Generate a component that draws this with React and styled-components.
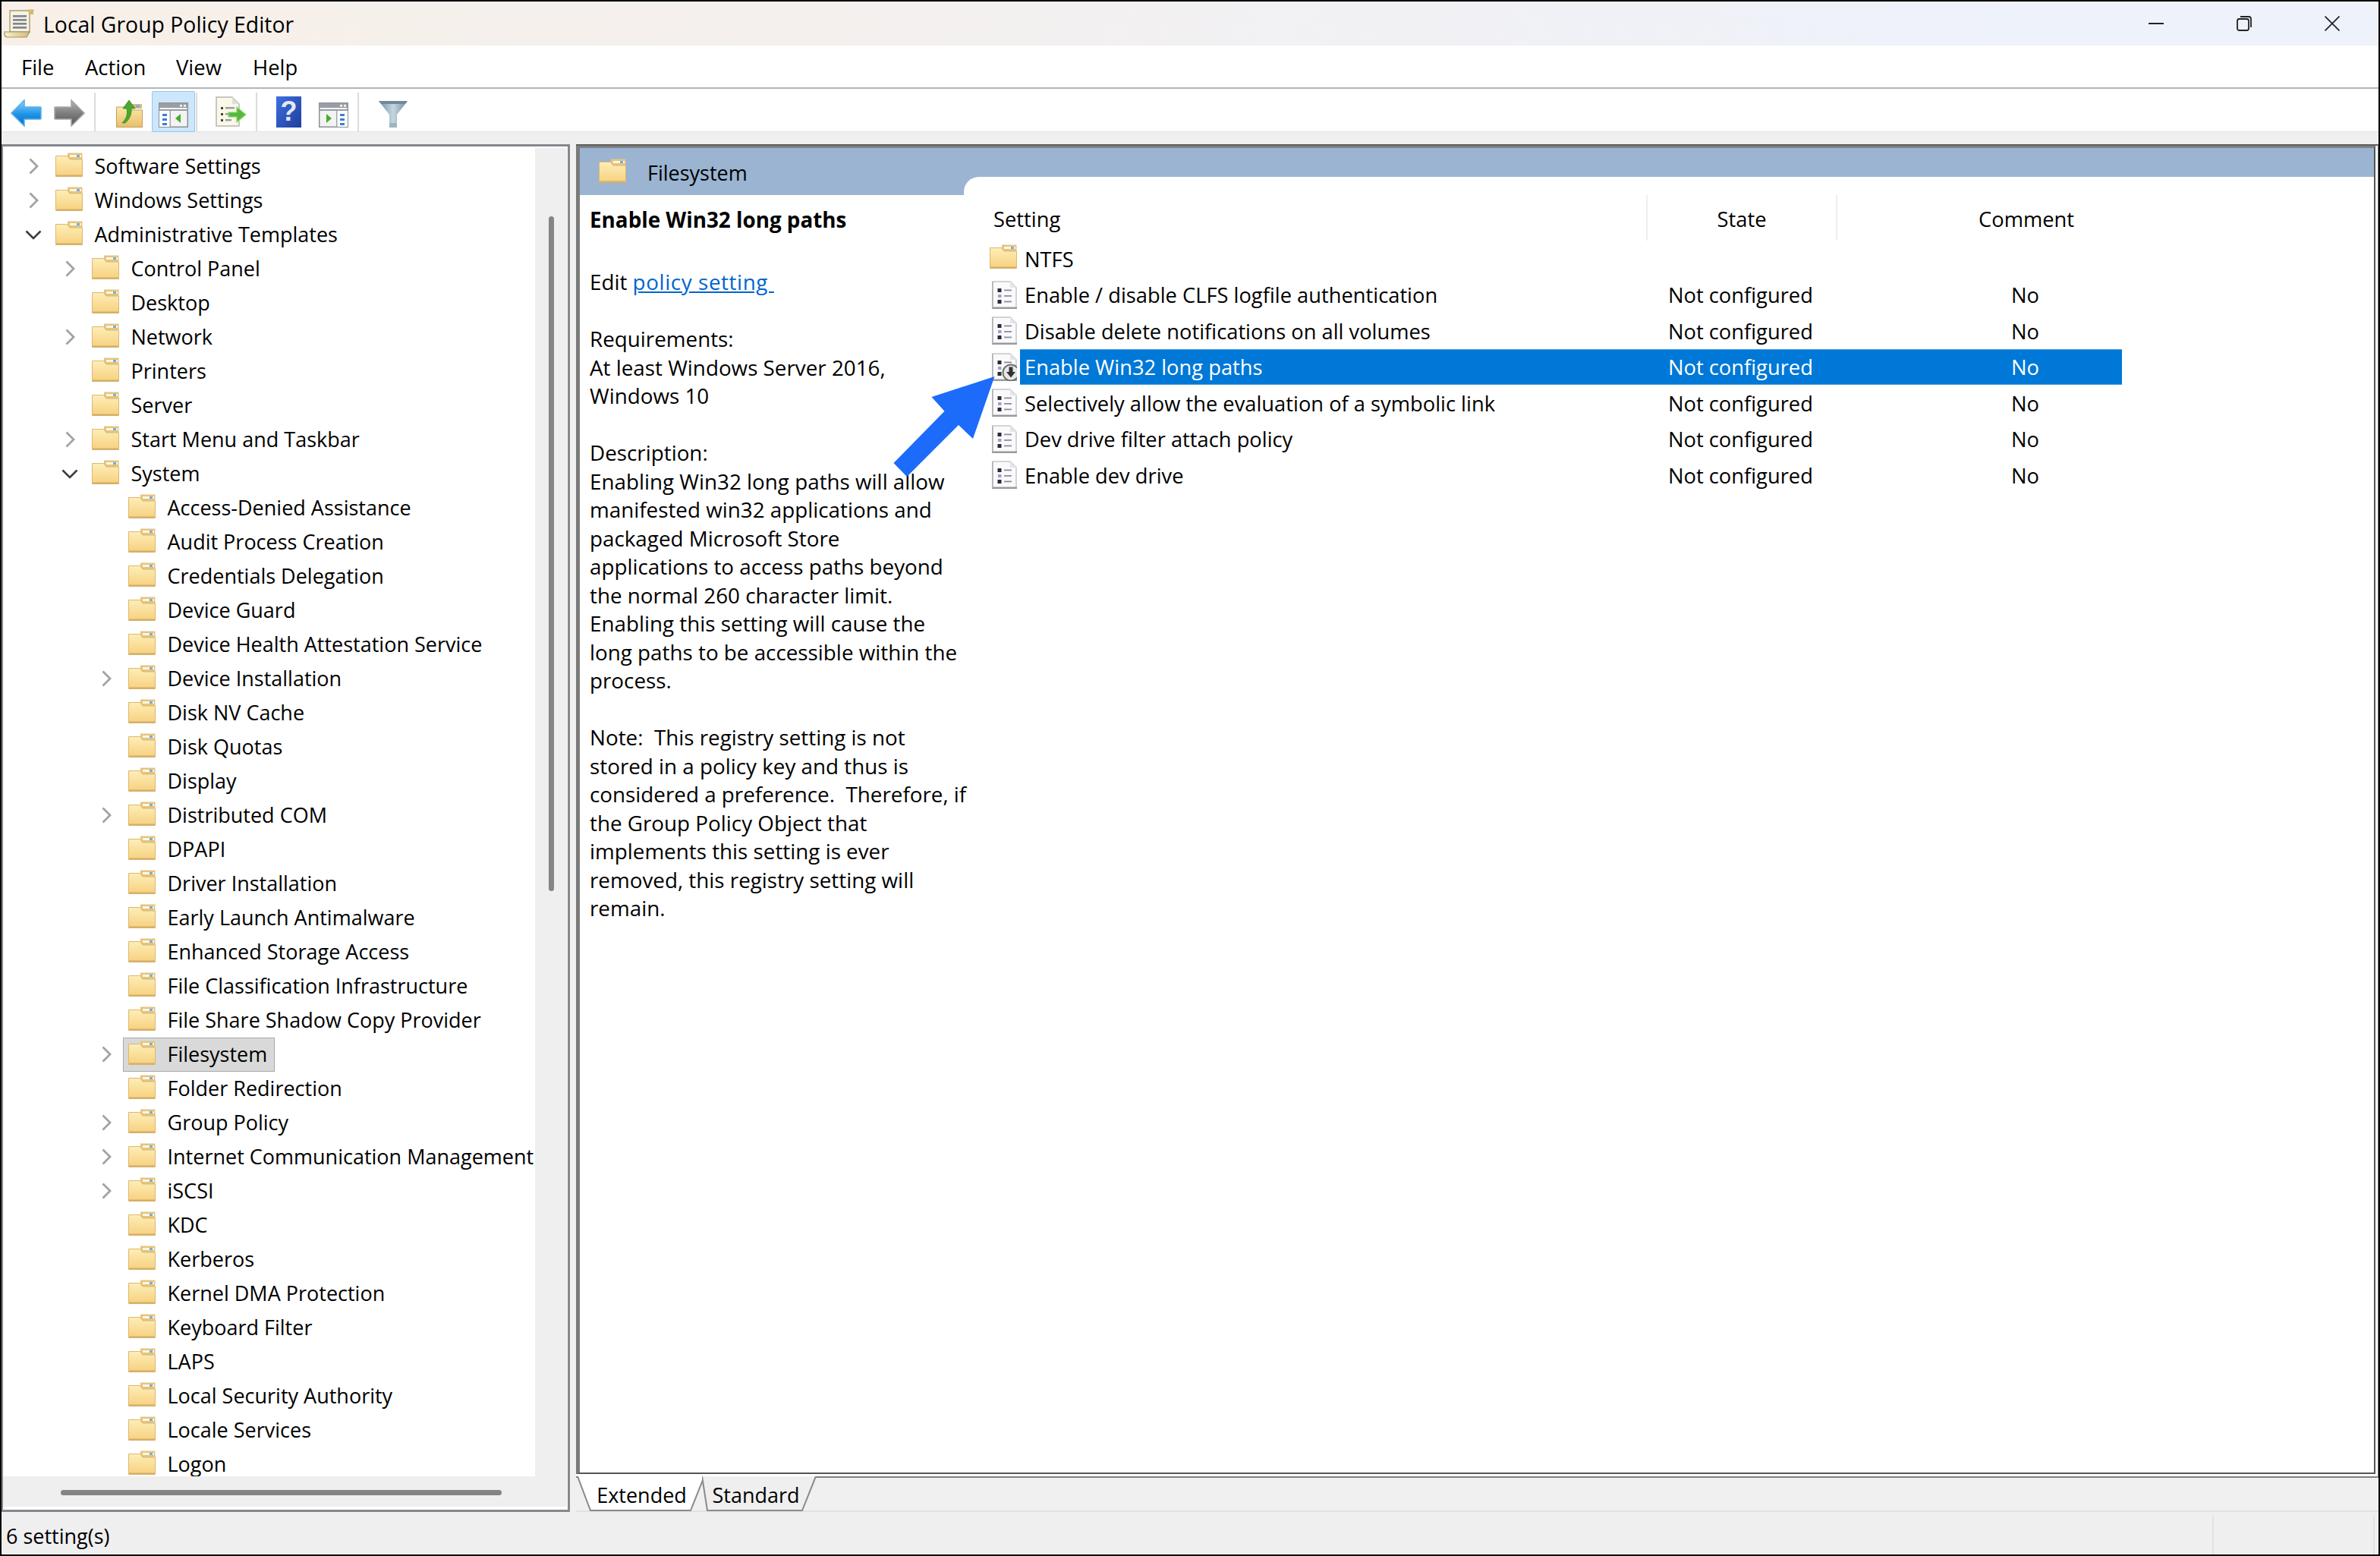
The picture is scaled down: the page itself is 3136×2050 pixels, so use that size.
import React from "react";
import styled, { createGlobalStyle } from "styled-components";

const Global = createGlobalStyle`
  html, body { margin: 0; padding: 0; background: #000; }
  * { box-sizing: border-box; }
  body { font-family: "Open Sans", "Noto Sans", "Liberation Sans", sans-serif; font-size: 27px; color: #000; }
`;

const Root = styled.div`
  position: relative;
  width: 3136px;
  height: 2050px;
  border: 2px solid #000;
  background: #f0f0f0;
  display: flex;
  flex-direction: column;
  overflow: hidden;
`;
const TitleBar = styled.div`
  height: 58px;
  flex: none;
  display: flex;
  align-items: center;
  padding-left: 3px;
  gap: 12px;
  background: linear-gradient(90deg, #f8f0e8 0%, #f4f0ee 35%, #eef2fb 85%);
`;
const TitleText = styled.div`
  font-size: 28.4px;
  line-height: 58px;
  padding-top: 2px;
  white-space: nowrap;
`;
const WindowButtons = styled.div`
  margin-left: auto;
  margin-right: 3px;
  display: flex;
`;
const WindowButton = styled.div`
  width: 116px;
  height: 58px;
  display: flex;
  align-items: center;
  justify-content: center;
`;
const MenuBar = styled.div`
  height: 57px;
  flex: none;
  background: #fff;
  border-bottom: 2px solid #b4b4b4;
  display: flex;
  align-items: center;
  padding-left: 26px;
  padding-top: 2px;
  font-size: 27.4px;
`;
const MenuItem = styled.div`
  width: ${(p) => p.$w}px;
`;
const Toolbar = styled.div`
  height: 57px;
  flex: none;
  background: #fff;
  border-bottom: 1px solid #e4e4e4;
  display: flex;
  align-items: flex-start;
  padding: 3px 0 0 4px;
`;
const ToolButton = styled.div`
  width: 57px;
  height: 54px;
  flex: none;
  margin-left: ${(p) => p.$ml || 0}px;
  padding-top: ${(p) => p.$pt || 0}px;
  display: flex;
  align-items: center;
  justify-content: center;
  border: 1px solid ${(p) => (p.$hot ? "#92c6f2" : "transparent")};
  border-radius: 2px;
  background: ${(p) => (p.$hot ? "#cce6fb" : "transparent")};
  position: relative;
`;
const ToolSep = styled.div`
  width: 2px;
  height: 51px;
  flex: none;
  background: #dcdcdc;
  margin: 2px ${(p) => p.$mr ?? 16}px 0 ${(p) => p.$ml ?? 4}px;
`;
const Strip = styled.div`
  height: 16px;
  flex: none;
  background: #efefef;
`;
const Content = styled.div`
  flex: 1;
  min-height: 0;
  display: flex;
  gap: 8px;
`;
const LeftPane = styled.div`
  width: 749px;
  flex: none;
  background: #fff;
  border-style: solid;
  border-color: #85888e;
  border-width: 3px 3px 3px 2px;
  padding: 2px 2px 4px 0;
  display: grid;
  grid-template-columns: 701px 42px;
  grid-template-rows: 1750px 40px;
`;
const Tree = styled.div`
  padding-top: 1.5px;
  background: #fff;
`;
const TreeRow = styled.div`
  height: 45px;
  display: flex;
  align-items: center;
  padding-left: ${(p) => 18 + p.$depth * 48}px;
  white-space: nowrap;
`;
const ChevronSlot = styled.div`
  width: 44px;
  flex: none;
  display: flex;
  justify-content: center;
  align-items: center;
`;
const TreeLabel = styled.div`
  height: 45px;
  display: flex;
  align-items: center;
  gap: 15.5px;
  padding: 0 8.5px 0 6px;
  border: 1.5px solid ${(p) => (p.$sel ? "#a9a9a9" : "transparent")};
  background: ${(p) => (p.$sel ? "#d9d9d9" : "transparent")};
`;
const TreeText = styled.span`
  line-height: 30px;
`;
const VTrack = styled.div`
  background: #efefef;
  padding: 90px 0 0 18px;
`;
const VThumb = styled.div`
  width: 7px;
  height: 889px;
  border-radius: 4px;
  background: #858585;
`;
const HTrack = styled.div`
  grid-column: 1 / 3;
  background: #efefef;
  padding: 18px 0 0 76px;
`;
const HThumb = styled.div`
  width: 581px;
  height: 7px;
  border-radius: 4px;
  background: #858585;
`;
const RightCol = styled.div`
  flex: 1;
  min-width: 0;
  display: flex;
  flex-direction: column;
`;
const FrameWrap = styled.div`
  height: 1755px;
  flex: none;
  background: #fff;
  border-top: 2px solid #5d5d5d;
  border-right: 1px solid #777;
  padding: 0 3px 3px 0;
  display: flex;
`;
const Frame = styled.div`
  flex: 1;
  min-width: 0;
  background: #fff;
  border-style: solid;
  border-color: #808080 #555 #555 #7b7b7b;
  border-width: 3px 2px 2px 5px;
  display: flex;
  flex-direction: column;
`;
const Band = styled.div`
  height: 62px;
  flex: none;
  background: #9ab4d2;
  display: flex;
`;
const BandTitle = styled.div`
  width: 506px;
  flex: none;
  display: flex;
  align-items: center;
  gap: 28px;
  padding: 2px 0 0 25px;
`;
const Notch = styled.div`
  flex: 1;
  margin-top: 38px;
  background: #fff;
  border-top-left-radius: 20px;
`;
const Body = styled.div`
  flex: 1;
  min-height: 0;
  display: flex;
`;
const Desc = styled.div`
  width: 506px;
  flex: none;
  padding: 12.5px 0 0 13px;
  line-height: 37.5px;
  font-size: 27.8px;
  white-space: pre;
`;
const DescTitle = styled.div`
  font-weight: 700;
  padding-top: 1px;
  margin-bottom: 45px;
`;
const DescLink = styled.a`
  color: #0066cc;
  text-decoration: underline;
  letter-spacing: 0.6px;
`;
const List = styled.div`
  flex: 1;
  min-width: 0;
  font-size: 27.3px;
`;
const ListHead = styled.div`
  height: 60px;
  display: flex;
`;
const HeadCell = styled.div`
  width: ${(p) => p.$w}px;
  flex: none;
  display: flex;
  align-items: center;
  padding-top: 3px;
  justify-content: ${(p) => (p.$first ? "flex-start" : "center")};
  padding-left: ${(p) => (p.$first ? 39 : 0)}px;
  border-left: ${(p) => (p.$first ? "none" : "2px solid #efefef")};
`;
const ListRow = styled.div`
  height: 47.5px;
  display: flex;
`;
const RowIcon = styled.div`
  width: 74px;
  flex: none;
  display: flex;
  align-items: center;
  justify-content: flex-end;
  padding-right: 4px;
`;
const RowBody = styled.div`
  width: 1452px;
  flex: none;
  display: flex;
  align-items: center;
  padding-top: 0.5px;
  background: ${(p) => (p.$sel ? "#0078d7" : "transparent")};
  color: ${(p) => (p.$sel ? "#fff" : "#000")};
  box-shadow: ${(p) => (p.$sel ? "inset 0 1px 0 #3f9be4, inset 0 -1px 0 #3f9be4" : "none")};
  white-space: nowrap;
`;
const NameCell = styled.div`
  width: 825px;
  flex: none;
  padding-left: 6px;
`;
const StateCell = styled.div`
  width: 250px;
  flex: none;
  padding-left: 29px;
`;
const CommentCell = styled.div`
  flex: 1;
  padding-left: 231px;
`;
const TabRow = styled.div`
  height: 47px;
  flex: none;
  border-top: 2px solid #808080;
  border-bottom: 2px solid #e2e2e2;
  display: flex;
  padding-left: 2px;
`;
const Tab = styled.div`
  position: relative;
  height: 46px;
  margin-top: -2px;
  width: ${(p) => p.$w}px;
  margin-left: ${(p) => p.$ml || 0}px;
  padding: 0 ${(p) => p.$pr || 0}px 0 ${(p) => p.$pl || 0}px;
  flex: none;
  display: flex;
  align-items: center;
  justify-content: center;
`;
const TabShape = styled.svg`
  position: absolute;
  inset: 0;
`;
const TabText = styled.span`
  position: relative;
  padding-top: 3px;
`;
const StatusBar = styled.div`
  height: 56px;
  flex: none;
  display: flex;
  align-items: stretch;
  background: #efefef;
`;
const StatusText = styled.div`
  width: 2913px;
  flex: none;
  padding: 13px 0 0 6px;
  line-height: 38px;
`;
const StatusCell = styled.div`
  margin-right: ${(p) => p.$mr}px;
  margin-top: 5px;
  width: 2px;
  background: #e2e2e2;
`;
const CalloutArrow = styled.svg`
  position: absolute;
  left: 1168px;
  top: 488px;
`;
const FolderSvg = styled.svg`
  flex: none;
  margin-bottom: 5px;
`;

const FolderIcon = () => (
  <FolderSvg width="36" height="32" viewBox="0 0 36 32">
    <defs>
      <linearGradient id="fld" x1="0" y1="0" x2="0" y2="1">
        <stop offset="0" stopColor="#fdeeb8" />
        <stop offset="1" stopColor="#f7d07e" />
      </linearGradient>
    </defs>
    <path d="M16 0.5H35.5V10H16Z" fill="#e6c47e" />
    <path d="M19 3H34V6H19Z" fill="#fdf6e0" />
    <path d="M28 3H32V6H28Z" fill="#6fb1e6" />
    <path d="M0.5 4.5H15.5L19 9H35.5V31.5H0.5Z" fill="url(#fld)" stroke="#dcb870" />
    <path d="M1 29.5H35V31.5H1Z" fill="#d2ae68" />
  </FolderSvg>
);

const PolicyIcon = ({ badge }) => (
  <svg width="33" height="37" viewBox="0 0 33 37" style={{ flex: "none" }}>
    <path d="M1 1H24L32 9V36H1Z" fill="#fafafa" stroke="#c4c6ca" strokeWidth="1.5" />
    <path d="M24 1V9H32Z" fill="#e3e5e8" />
    <path d="M0 34.5H33V37H0Z" fill="#979a9d" />
    <path d="M0 1H1.5V36H0Z" fill="#b0b2b5" />
    <rect x="7.5" y="10" width="5" height="5" fill="#2b2b36" />
    <rect x="8" y="18" width="4.5" height="4" fill="#a79dc8" />
    <rect x="7.5" y="25" width="5" height="5" fill="#2b2b36" />
    <rect x="16" y="11.5" width="10" height="1.8" fill="#8a8fa3" />
    <rect x="16" y="19" width="10" height="1.8" fill="#8a8fa3" />
    <rect x="16" y="26.5" width="10" height="1.8" fill="#8a8fa3" />
    {badge && (
      <g>
        <circle cx="25" cy="26" r="10.5" fill="#e8e8e8" stroke="#707070" strokeWidth="2" />
        <path d="M22.5 18.5H27.5V25H31L25 32.5L19 25H22.5Z" fill="#333" />
      </g>
    )}
  </svg>
);

const Chevron = ({ open }) =>
  open ? (
    <svg width="22" height="13" viewBox="0 0 22 13">
      <path d="M1.5 1.5L11 11L20.5 1.5" fill="none" stroke="#3c3c3c" strokeWidth="2.6" />
    </svg>
  ) : (
    <svg width="13" height="22" viewBox="0 0 13 22">
      <path d="M1.5 1.5L11 11L1.5 20.5" fill="none" stroke="#a2a2a2" strokeWidth="2.8" />
    </svg>
  );

const ScrollIcon = () => (
  <svg width="40" height="38" viewBox="0 0 40 38" style={{ flex: "none" }}>
    <defs>
      <linearGradient id="roll" x1="0" y1="0" x2="1" y2="0">
        <stop offset="0" stopColor="#f8f0c6" />
        <stop offset="1" stopColor="#d2bc7c" />
      </linearGradient>
    </defs>
    <path d="M8 2H39L34 7V30H8Z" fill="#f4f2e4" stroke="#a89c70" strokeWidth="1.4" />
    <path d="M32 0.5H39V7H33Z" fill="#d8b869" />
    <rect x="12" y="8" width="18" height="2.6" fill="#7f838b" />
    <rect x="12" y="13" width="18" height="2.6" fill="#7f838b" />
    <rect x="12" y="18" width="18" height="2.6" fill="#7f838b" />
    <rect x="12" y="23" width="18" height="2.6" fill="#7f838b" />
    <path d="M1 30H34L30 37H4Q1 36 1 33Z" fill="url(#roll)" stroke="#a3945c" strokeWidth="1.2" />
  </svg>
);

const BackIcon = ({ flip }) => (
  <svg width="41" height="36" viewBox="0 0 41 36" style={flip ? { transform: "scaleX(-1)" } : undefined}>
    <defs>
      <linearGradient id="bk" x1="0" y1="0" x2="0" y2="1">
        <stop offset="0" stopColor="#8fd4fa" />
        <stop offset="0.55" stopColor="#1e93e6" />
        <stop offset="1" stopColor="#0a6fc6" />
      </linearGradient>
      <linearGradient id="fw" x1="0" y1="0" x2="0" y2="1">
        <stop offset="0" stopColor="#b4b4b4" />
        <stop offset="0.55" stopColor="#7a7a7a" />
        <stop offset="1" stopColor="#555" />
      </linearGradient>
    </defs>
    <path
      d="M1 18L18 1V10H39Q40 10 40 11V25Q40 26 39 26H18V35Z"
      fill={flip ? "url(#fw)" : "url(#bk)"}
      stroke={flip ? "#a6a6a6" : "#58aeea"}
      strokeWidth="1.6"
    />
  </svg>
);

const UpIcon = () => (
  <svg width="35" height="37" viewBox="0 0 35 37">
    <defs>
      <linearGradient id="upf" x1="0" y1="0" x2="0" y2="1">
        <stop offset="0" stopColor="#fbe9a8" />
        <stop offset="1" stopColor="#e8bf6a" />
      </linearGradient>
    </defs>
    <path d="M14 6H34V12H14Z" fill="#dcbb76" />
    <path d="M26 7.5H31V10.5H26Z" fill="#6fb1e6" />
    <path d="M0.5 10H14L17 14H34.5V36.5H0.5Z" fill="url(#upf)" stroke="#c79d55" />
    <path d="M8 31C15 24 15 18 14 12H9L17 1L25 12H20C21 19 17 27 12 31Z" fill="#4da62e" stroke="#2f8a1e" strokeWidth="0.8" />
  </svg>
);

const PaneIcon = ({ right }) => (
  <svg width="39" height="33" viewBox="0 0 39 33">
    <rect x="0.75" y="0.75" width="37.5" height="31.5" fill="#f3f3f3" stroke="#8c9096" strokeWidth="1.5" />
    <rect x="1" y="1" width="37" height="6" fill="#9a9ea4" />
    <rect x="1" y="9" width="37" height="2" fill="#9a9ea4" />
    <rect x="28" y="3" width="3" height="2.5" fill="#fff" />
    <rect x="33" y="3" width="3" height="2.5" fill="#fff" />
    {right ? (
      <g>
        <rect x="24" y="11" width="14" height="21" fill="#fff" />
        <rect x="23" y="11" width="1.5" height="21" fill="#a2a6ac" />
        <rect x="28" y="15" width="6" height="3" fill="#3b7fcf" />
        <rect x="28" y="21" width="6" height="3" fill="#3b7fcf" />
        <rect x="28" y="27" width="6" height="3" fill="#3b7fcf" />
        <path d="M10 15L17 21L10 27Z" fill="#46ae2e" />
      </g>
    ) : (
      <g>
        <rect x="1" y="11" width="14" height="21" fill="#fff" />
        <rect x="14.5" y="11" width="1.5" height="21" fill="#a2a6ac" />
        <rect x="5" y="15" width="6" height="3" fill="#3b7fcf" />
        <rect x="5" y="21" width="6" height="3" fill="#3b7fcf" />
        <rect x="5" y="27" width="6" height="3" fill="#3b7fcf" />
        <path d="M29 15L22 21L29 27Z" fill="#46ae2e" />
      </g>
    )}
  </svg>
);

const ExportIcon = () => (
  <svg width="41" height="40" viewBox="0 0 41 40">
    <path d="M1 1H22L31 10V39H1Z" fill="#faf8e6" stroke="#b6b6b0" strokeWidth="1.5" />
    <path d="M22 1V10H31Z" fill="#dededa" />
    <rect x="7" y="14" width="3" height="3" fill="#444" />
    <rect x="13" y="14" width="12" height="2.4" fill="#9a9ca6" />
    <rect x="7" y="22" width="3" height="3" fill="#444" />
    <rect x="13" y="22" width="8" height="2.4" fill="#9a9ca6" />
    <rect x="7" y="30" width="3" height="3" fill="#444" />
    <rect x="13" y="30" width="8" height="2.4" fill="#9a9ca6" />
    <path d="M17 21H28V14L40 24L28 34V27H17Z" fill="#55bb3a" stroke="#8fd67a" strokeWidth="1.2" />
  </svg>
);

const HelpIcon = () => (
  <svg width="33" height="41" viewBox="0 0 33 41">
    <defs>
      <linearGradient id="hlp" x1="0" y1="0" x2="1" y2="1">
        <stop offset="0" stopColor="#3f6fe0" />
        <stop offset="1" stopColor="#1d3f9e" />
      </linearGradient>
    </defs>
    <rect x="0" y="0" width="33" height="41" fill="url(#hlp)" />
    <text x="16.5" y="32" textAnchor="middle" fontSize="36" fontWeight="700" fontFamily="Liberation Sans, sans-serif" fill="#e4e8f4">?</text>
  </svg>
);

const FilterIcon = () => (
  <svg width="38" height="37" viewBox="0 0 38 37">
    <defs>
      <linearGradient id="flt" x1="0" y1="0" x2="1" y2="0">
        <stop offset="0" stopColor="#6f92a8" />
        <stop offset="0.5" stopColor="#c6d6e0" />
        <stop offset="1" stopColor="#6c8a9e" />
      </linearGradient>
    </defs>
    <path d="M0 1H38L24 19V36H14V19Z" fill="url(#flt)" />
    <path d="M0 1H38L35 5H3Z" fill="#71899a" />
    <path d="M14 30H24V36H14Z" fill="#9db4c2" />
  </svg>
);

const tree = [
  ["Software Settings", 0, "c"],
  ["Windows Settings", 0, "c"],
  ["Administrative Templates", 0, "o"],
  ["Control Panel", 1, "c"],
  ["Desktop", 1],
  ["Network", 1, "c"],
  ["Printers", 1],
  ["Server", 1],
  ["Start Menu and Taskbar", 1, "c"],
  ["System", 1, "o"],
  ["Access-Denied Assistance", 2],
  ["Audit Process Creation", 2],
  ["Credentials Delegation", 2],
  ["Device Guard", 2],
  ["Device Health Attestation Service", 2],
  ["Device Installation", 2, "c"],
  ["Disk NV Cache", 2],
  ["Disk Quotas", 2],
  ["Display", 2],
  ["Distributed COM", 2, "c"],
  ["DPAPI", 2],
  ["Driver Installation", 2],
  ["Early Launch Antimalware", 2],
  ["Enhanced Storage Access", 2],
  ["File Classification Infrastructure", 2],
  ["File Share Shadow Copy Provider", 2],
  ["Filesystem", 2, "c", true],
  ["Folder Redirection", 2],
  ["Group Policy", 2, "c"],
  ["Internet Communication Management", 2, "c"],
  ["iSCSI", 2, "c"],
  ["KDC", 2],
  ["Kerberos", 2],
  ["Kernel DMA Protection", 2],
  ["Keyboard Filter", 2],
  ["LAPS", 2],
  ["Local Security Authority", 2],
  ["Locale Services", 2],
  ["Logon", 2],
];

const settings = [
  { name: "Enable / disable CLFS logfile authentication" },
  { name: "Disable delete notifications on all volumes" },
  { name: "Enable Win32 long paths", sel: true },
  { name: "Selectively allow the evaluation of a symbolic link" },
  { name: "Dev drive filter attach policy" },
  { name: "Enable dev drive" },
];

const descText = `
Requirements:
At least Windows Server 2016,
Windows 10

Description:
Enabling Win32 long paths will allow
manifested win32 applications and
packaged Microsoft Store
applications to access paths beyond
the normal 260 character limit.
Enabling this setting will cause the
long paths to be accessible within the
process.

Note:  This registry setting is not
stored in a policy key and thus is
considered a preference.  Therefore, if
the Group Policy Object that
implements this setting is ever
removed, this registry setting will
remain.`;

export default function App() {
  return (
    <Root>
      <Global />
      <TitleBar>
        <ScrollIcon />
        <TitleText>Local Group Policy Editor</TitleText>
        <WindowButtons>
          <WindowButton>
            <svg width="20" height="20" viewBox="0 0 20 20">
              <path d="M0 10H20" stroke="#222" strokeWidth="2" />
            </svg>
          </WindowButton>
          <WindowButton>
            <svg width="20" height="20" viewBox="0 0 20 20">
              <rect x="1" y="4" width="15" height="15" rx="2.5" fill="none" stroke="#222" strokeWidth="1.8" />
              <path d="M5 1H16Q19 1 19 4V15" fill="none" stroke="#222" strokeWidth="1.8" />
            </svg>
          </WindowButton>
          <WindowButton>
            <svg width="20" height="20" viewBox="0 0 20 20">
              <path d="M0.5 0.5L19.5 19.5M19.5 0.5L0.5 19.5" stroke="#222" strokeWidth="1.7" />
            </svg>
          </WindowButton>
        </WindowButtons>
      </TitleBar>
      <MenuBar>
        <MenuItem $w={84}>File</MenuItem>
        <MenuItem $w={120}>Action</MenuItem>
        <MenuItem $w={101}>View</MenuItem>
        <MenuItem $w={70}>Help</MenuItem>
      </MenuBar>
      <Toolbar>
        <ToolButton $pt={3}><BackIcon /></ToolButton>
        <ToolButton $pt={3}><BackIcon flip /></ToolButton>
        <ToolSep />
        <ToolButton $pt={4}><UpIcon /></ToolButton>
        <ToolButton $hot $ml={1} $pt={8}><PaneIcon /></ToolButton>
        <ToolSep $ml={1} />
        <ToolButton><ExportIcon /></ToolButton>
        <ToolSep $mr={13} />
        <ToolButton><HelpIcon /></ToolButton>
        <ToolButton $ml={2} $pt={8}><PaneIcon right /></ToolButton>
        <ToolSep $ml={3} />
        <ToolButton $pt={6}><FilterIcon /></ToolButton>
      </Toolbar>
      <Strip />
      <Content>
        <LeftPane>
          <Tree>
            {tree.map(([label, depth, chev, sel]) => (
              <TreeRow key={label} $depth={depth}>
                <ChevronSlot>{chev && <Chevron open={chev === "o"} />}</ChevronSlot>
                <TreeLabel $sel={sel}>
                  <FolderIcon />
                  <TreeText>{label}</TreeText>
                </TreeLabel>
              </TreeRow>
            ))}
          </Tree>
          <VTrack><VThumb /></VTrack>
          <HTrack><HThumb /></HTrack>
        </LeftPane>
        <RightCol>
          <FrameWrap>
            <Frame>
              <Band>
                <BandTitle>
                  <FolderIcon />
                  <span>Filesystem</span>
                </BandTitle>
                <Notch />
              </Band>
              <Body>
                <Desc>
                  <DescTitle>Enable Win32 long paths</DescTitle>
                  <div>Edit <DescLink href="#">policy setting </DescLink></div>
                  <div>{descText}</div>
                </Desc>
                <List>
                  <ListHead>
                    <HeadCell $w={899} $first>Setting</HeadCell>
                    <HeadCell $w={250}>State</HeadCell>
                    <HeadCell $w={500}>Comment</HeadCell>
                  </ListHead>
                  <ListRow>
                    <RowIcon><FolderIcon /></RowIcon>
                    <RowBody><NameCell>NTFS</NameCell></RowBody>
                  </ListRow>
                  {settings.map((s) => (
                    <ListRow key={s.name}>
                      <RowIcon><PolicyIcon badge={s.sel} /></RowIcon>
                      <RowBody $sel={s.sel}>
                        <NameCell>{s.name}</NameCell>
                        <StateCell>Not configured</StateCell>
                        <CommentCell>No</CommentCell>
                      </RowBody>
                    </ListRow>
                  ))}
                </List>
              </Body>
            </Frame>
          </FrameWrap>
          <TabRow>
            <Tab $w={167} $pl={2}>
              <TabShape width="167" height="46" viewBox="0 0 167 46">
                <path d="M0 0H167L149 45H17Z" fill="#fff" />
                <path d="M0 0L17 45H149L167 0" fill="none" stroke="#8a8a8a" strokeWidth="2" />
              </TabShape>
              <TabText>Extended</TabText>
            </Tab>
            <Tab $w={150} $ml={-3} $pr={8}>
              <TabShape width="150" height="46" viewBox="0 0 150 46">
                <path d="M0 0H150L132 45H7Z" fill="#efefef" />
                <path d="M0 0L7 45H132L150 0" fill="none" stroke="#8a8a8a" strokeWidth="2" />
              </TabShape>
              <TabText>Standard</TabText>
            </Tab>
          </TabRow>
        </RightCol>
      </Content>
      <StatusBar>
        <StatusText>6 setting(s)</StatusText>
        <StatusCell $mr={210} />
        <StatusCell $mr={0} />
      </StatusBar>
      <CalloutArrow width="145" height="145" viewBox="0 0 145 145">
        <polygon points="140.5,6 57.5,33 74.5,51.7 7.5,120 25,138 93,70 112,88" fill="#1c6bfa" />
      </CalloutArrow>
    </Root>
  );
}
